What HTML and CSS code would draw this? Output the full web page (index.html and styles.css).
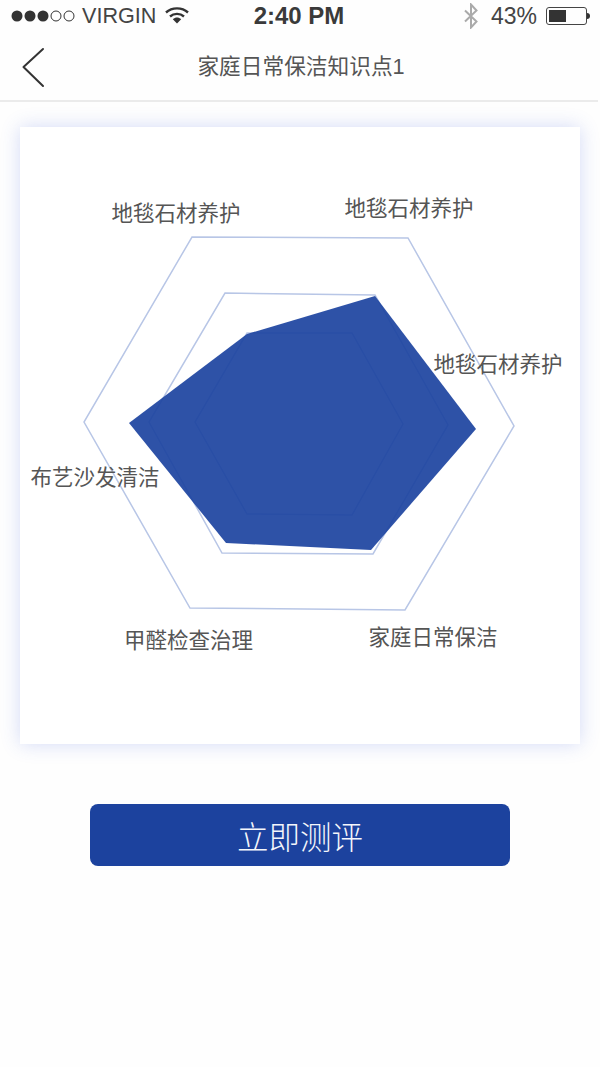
FILE: index.html
```html
<!DOCTYPE html>
<html lang="zh-CN">
<head>
  <meta charset="UTF-8">
  <meta name="viewport" content="width=device-width, initial-scale=1">
  <title>家庭日常保洁知识点1</title>
  <link rel="stylesheet" href="styles.css">
</head>
<body>
  <div class="status-bar">
    <div class="status-left">
      <svg class="signal" width="64" height="14" viewBox="0 0 64 14">
        <circle cx="6" cy="7" r="5.5" fill="#333"/>
        <circle cx="19" cy="7" r="5.5" fill="#333"/>
        <circle cx="32" cy="7" r="5.500" fill="#333"/>
        <circle cx="45" cy="7" r="5" fill="none" stroke="#333" stroke-width="1"/>
        <circle cx="58" cy="7" r="5" fill="none" stroke="#333" stroke-width="1"/>
      </svg>
      <span class="carrier">VIRGIN</span>
      <svg class="wifi" width="24" height="18" viewBox="0 0 24 18">
        <path d="M1 6.5C7 1 17 1 23 6.5" fill="none" stroke="#333" stroke-width="2.4"/>
        <path d="M5 10.5C9 7 15 7 19 10.5" fill="none" stroke="#333" stroke-width="2.4"/>
        <path d="M7.8 13.2C10.5 11 13.5 11 16.2 13.2L12 17.6Z" fill="#333"/>
      </svg>
    </div>
    <div class="status-time">2:40 PM</div>
    <div class="status-right">
      <svg class="bluetooth" width="16" height="26" viewBox="0 0 16 26">
        <path d="M2 7.5L13.5 18.5L8 24.5V1.5L13.5 7.5L2 18.5" fill="none" stroke="#aaa" stroke-width="2"/>
      </svg>
      <span class="battery-text">43%</span>
      <div class="battery">
        <div class="battery-level"></div>
      </div>
      <div class="battery-nub"></div>
    </div>
  </div>

  <header class="nav-bar">
    <svg class="back-icon" width="24" height="42" viewBox="0 0 24 42">
      <path d="M22 2L2.500 20L22 39" fill="none" stroke="#333" stroke-width="2" stroke-linecap="round" stroke-linejoin="round"/>
    </svg>
    <h1 class="nav-title">家庭日常保洁知识点1</h1>
  </header>

  <section class="chart-card">
    <!-- viewBox usa las coordenadas de la página -->
    <svg class="radar" width="560" height="617" viewBox="20 127 560 617">
      <polygon class="grid-line" points="192,237 408,238 514,426 405,610 190,608 84,422"/>
      <polygon class="grid-line" points="225,293 375,295 448,425 373,554 222,553 149,422"/>
      <polygon class="grid-line" points="247,333 352,333 403,424 352,515 247,514 195,422"/>
      <polygon class="data-area" points="375,296 476,429 371,550 226,543 129,423 247,334"/>
      <text class="axis-label" x="111.500" y="221">地毯石材养护</text>
      <text class="axis-label" x="344.500" y="216">地毯石材养护</text>
      <text class="axis-label" x="433.500" y="372">地毯石材养护</text>
      <text class="axis-label" x="30.500" y="485">布艺沙发清洁</text>
      <text class="axis-label" x="124" y="648">甲醛检查治理</text>
      <text class="axis-label" x="368.500" y="645">家庭日常保洁</text>
    </svg>
  </section>

  <button type="button" class="start-button">立即测评</button>
</body>
</html>
```

FILE: styles.css
```css
body {
  font-family: "Liberation Sans", "Noto Sans CJK SC", sans-serif;
  background-color: #fefefe;
  margin: 0;
  padding: 0;
  width: 600px;
  height: 1067px;
  overflow: hidden;
  display: flex;
  flex-direction: column;
  align-items: center;
}
.status-bar {
  width: 100%;
  height: 32px;
  box-sizing: border-box;
  display: grid;
  grid-template-columns: 1fr auto 1fr;
  align-items: center;
  color: #333;
}
.status-left {
  display: flex;
  align-items: center;
  padding-left: 11px;
}
.carrier {
  font-size: 21.6px;
  margin-left: 7px;
  color: #444;
}
.wifi {
  margin-left: 9px;
  margin-top: -2px;
}
.status-time {
  font-size: 24px;
  font-weight: bold;
  color: #3a3a3a;
  margin-right: 2px;
}
.status-right {
  display: flex;
  align-items: center;
  justify-content: flex-end;
  padding-right: 10px;
}
.battery-text {
  font-size: 23px;
  margin-left: 12px;
  color: #444;
}
.battery {
  width: 41px;
  height: 18px;
  box-sizing: border-box;
  margin-left: 9px;
  padding: 2px;
  border: 1px solid #444;
  border-radius: 3px;
}
.battery-level {
  width: 17px;
  height: 100%;
  background-color: #333;
}
.battery-nub {
  width: 3px;
  height: 6px;
  background-color: #333;
  border-radius: 0 3px 3px 0;
}
.nav-bar {
  width: 598px;
  height: 70px;
  margin-right: 2px;
  box-sizing: border-box;
  border-bottom: 2px solid #ebebeb;
  display: flex;
  align-items: center;
  justify-content: center;
  position: relative;
}
.back-icon {
  position: absolute;
  left: 21px;
  top: 15px;
}
.nav-title {
  margin: 0 0 3px 4px;
  font-size: 21.7px;
  font-weight: normal;
  color: #555;
}
.chart-card {
  width: 560px;
  height: 617px;
  margin-top: 25px;
  background-color: #fff;
  box-shadow: 0 0 18px rgba(60,90,220,0.22);
}
.radar {
  display: block;
}
.grid-line {
  fill: none;
  stroke: #b8c6e6;
  stroke-width: 1.5;
}
.data-area {
  fill: #1c439f;
  fill-opacity: 0.92;
}
.axis-label {
  font-size: 21.5px;
  fill: #555;
}
.start-button {
  width: 420px;
  height: 62px;
  margin-top: 60px;
  background-color: #1c429e;
  color: #f4f6fb;
  border: none;
  border-radius: 8px;
  font-family: inherit;
  font-size: 31.5px;
  font-weight: 300;
  cursor: pointer;
}
```
